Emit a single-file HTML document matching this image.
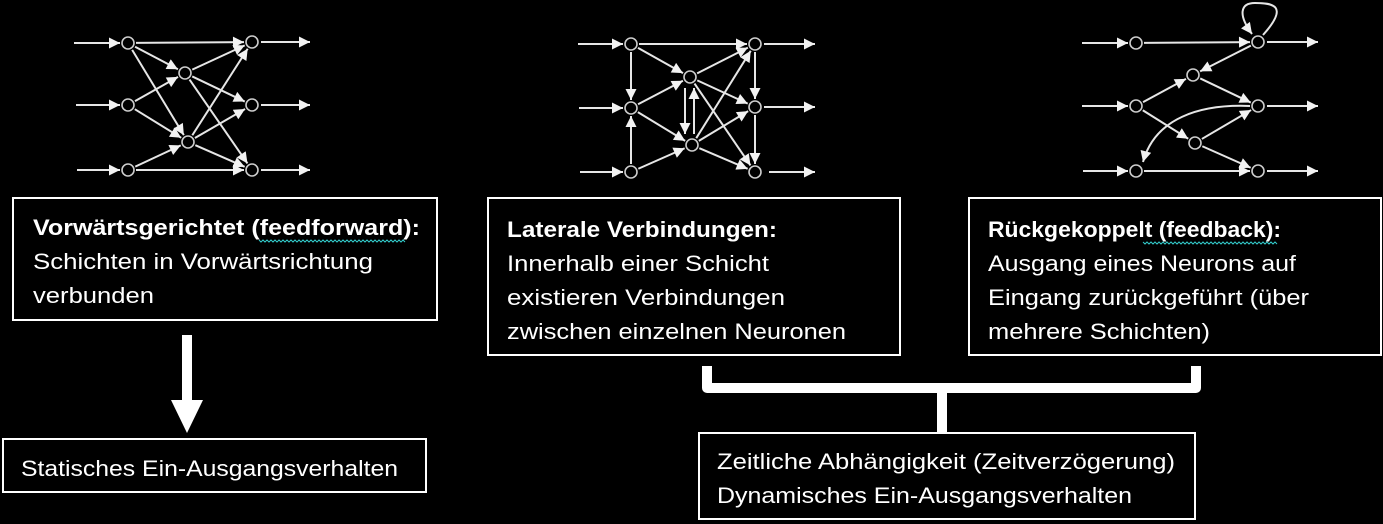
<!DOCTYPE html>
<html><head><meta charset="utf-8"><style>
html,body{margin:0;padding:0;background:#000;}
svg{display:block}
text{font-family:"Liberation Sans",sans-serif;fill:#fff;font-size:22px}
.b{font-weight:bold}
</style></head><body>
<svg id="s" width="1383" height="524" viewBox="0 0 1383 524" xmlns="http://www.w3.org/2000/svg">
<defs>
<marker id="a" viewBox="0 0 10 10" refX="10" refY="5" markerWidth="12" markerHeight="11" markerUnits="userSpaceOnUse" orient="auto"><path d="M0,0 L10,5 L0,10 z" fill="#f2f2f2"/></marker>
</defs>
<g id="net" stroke="#e6e6e6" stroke-width="2" fill="none"></g>
<g stroke="#fff" stroke-width="2" fill="none">
<rect x="13" y="198" width="424" height="122"/>
<rect x="488" y="198" width="412" height="157"/>
<rect x="969" y="198" width="412" height="157"/>
<rect x="3" y="439" width="423" height="53"/>
<rect x="699" y="433" width="496" height="86"/>
</g>
<rect x="182" y="335" width="10" height="66" fill="#fff"/>
<path d="M171,400 L203,400 L187,433 z" fill="#fff"/>
<path d="M707,366 L707,388 L1196,388 L1196,366 M942,388 L942,433" stroke="#fff" stroke-width="10" fill="none" stroke-linejoin="round"/>
<path id="w1" d="" stroke="#3cc" stroke-width="1" fill="none"/>
<path id="w2" d="" stroke="#3cc" stroke-width="1" fill="none"/>
<text x="33" y="235" class="b" textLength="387" lengthAdjust="spacingAndGlyphs">Vorwärtsgerichtet (feedforward):</text>
<text x="33" y="269" textLength="340" lengthAdjust="spacingAndGlyphs">Schichten in Vorwärtsrichtung</text>
<text x="33" y="303" textLength="121" lengthAdjust="spacingAndGlyphs">verbunden</text>
<text x="507" y="237" class="b" textLength="270" lengthAdjust="spacingAndGlyphs">Laterale Verbindungen:</text>
<text x="507" y="271" textLength="262" lengthAdjust="spacingAndGlyphs">Innerhalb einer Schicht</text>
<text x="507" y="305" textLength="278" lengthAdjust="spacingAndGlyphs">existieren Verbindungen</text>
<text x="507" y="339" textLength="339" lengthAdjust="spacingAndGlyphs">zwischen einzelnen Neuronen</text>
<text x="988" y="237" class="b" textLength="293" lengthAdjust="spacingAndGlyphs">Rückgekoppelt (feedback):</text>
<text x="988" y="271" textLength="308" lengthAdjust="spacingAndGlyphs">Ausgang eines Neurons auf</text>
<text x="988" y="305" textLength="321" lengthAdjust="spacingAndGlyphs">Eingang zurückgeführt (über</text>
<text x="988" y="339" textLength="222" lengthAdjust="spacingAndGlyphs">mehrere Schichten)</text>
<text x="21" y="476" textLength="377" lengthAdjust="spacingAndGlyphs">Statisches Ein-Ausgangsverhalten</text>
<text x="717" y="469" textLength="458" lengthAdjust="spacingAndGlyphs">Zeitliche Abhängigkeit (Zeitverzögerung)</text>
<text x="717" y="503" textLength="415" lengthAdjust="spacingAndGlyphs">Dynamisches Ein-Ausgangsverhalten</text>
</svg>
<script>
(function(){
var g=document.getElementById('net'),NS='http://www.w3.org/2000/svg';
function el(t,a){var e=document.createElementNS(NS,t);for(var k in a)e.setAttribute(k,a[k]);g.appendChild(e);return e;}
function ln(p,q,r1,r2){var dx=q[0]-p[0],dy=q[1]-p[1],d=Math.sqrt(dx*dx+dy*dy);var ux=dx/d,uy=dy/d;
el('line',{x1:p[0]+ux*r1,y1:p[1]+uy*r1,x2:q[0]-ux*r2,y2:q[1]-uy*r2,'marker-end':'url(#a)'});}
function e(p,q){ln(p,q,8,8);}
function net(N,edges,ins,outs){
edges.forEach(function(x){e(N[x[0]],N[x[1]]);});
ins.forEach(function(x){el('line',{x1:x[0],y1:x[1],x2:x[2]-8,y2:x[1],'marker-end':'url(#a)'});});
outs.forEach(function(x){el('line',{x1:x[0]+9,y1:x[1],x2:x[2],y2:x[1],'marker-end':'url(#a)'});});
for(var k in N)el('circle',{cx:N[k][0],cy:N[k][1],r:6,stroke:'#ccc','stroke-width':1.6,fill:'#000'});}
var A={i1:[128,43],i2:[128,105],i3:[128,170],h1:[185,73],h2:[188,142],o1:[252,42],o2:[252,105],o3:[252,170]};
net(A,[['i1','o1'],['i1','h1'],['i1','h2'],['i2','h1'],['i2','h2'],['i3','h2'],['i3','o3'],['h1','o1'],['h1','o2'],['h1','o3'],['h2','o1'],['h2','o2'],['h2','o3']],
[[74,43,128],[76,105,128],[77,170,128]],[[252,42,310],[252,105,310],[252,170,310]]);
var B={i1:[631,44],i2:[631,108],i3:[631,172],h1:[690,77],h2:[692,145],o1:[755,44],o2:[755,107],o3:[755,172]};
net(B,[['i1','o1'],['i1','i2'],['i3','i2'],['i1','h1'],['i2','h1'],['i2','h2'],['i3','h2'],['h1','o1'],['h1','o2'],['h1','o3'],['h2','o1'],['h2','o2'],['h2','o3'],['o1','o2'],['o2','o3']],
[[578,44,631],[579,108,631],[580,172,631]],[[755,44,815],[755,107,815],[760,172,815]]);
el('line',{x1:685,y1:88,x2:685,y2:134,'marker-end':'url(#a)'});
el('line',{x1:694,y1:134,x2:694,y2:88,'marker-end':'url(#a)'});
var C={i1:[1136,43],i2:[1136,106],i3:[1136,171],h1:[1193,75],h2:[1195,143],o1:[1258,42],o2:[1258,106],o3:[1258,171]};
el('path',{d:'M1250,106 C1200,104 1155,118 1143,162','marker-end':'url(#a)'});
el('path',{d:'M1263,35 C1290,5 1272,3 1255,3 C1240,3 1238,15 1252,34','marker-end':'url(#a)'});
net(C,[['i1','o1'],['o1','h1'],['i2','h1'],['h1','o2'],['i2','h2'],['h2','o2'],['h2','o3'],['i3','o3']],
[[1082,43,1136],[1082,106,1136],[1083,171,1136]],[[1258,42,1318],[1258,106,1318],[1258,171,1318]]);
function wav(id,x0,x1,y){var d='M'+x0+','+y,t=0;for(var x=x0+2;x<=x1;x+=2){t^=1;d+=' L'+x+','+(y+(t?2:0));}document.getElementById(id).setAttribute('d',d);}
wav('w1',259,406,240);wav('w2',1143,1277,242);
})();
</script>
</body></html>
